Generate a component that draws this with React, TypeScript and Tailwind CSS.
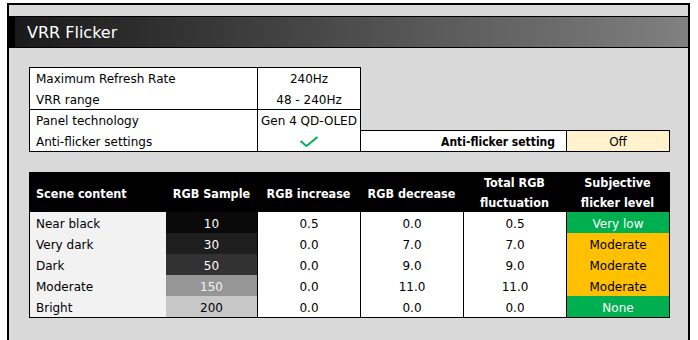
import React from "react";

const font = { fontFamily: '"DejaVu Sans", Verdana, sans-serif' };

type Row = {
  scene: string;
  sample: number;
  sampleBg: string;
  sampleText: string;
  inc: string;
  dec: string;
  total: string;
  level: string;
  levelBg: string;
  levelText: string;
};

const rows: Row[] = [
  { scene: "Near black", sample: 10, sampleBg: "bg-[#0a0a0a]", sampleText: "text-white", inc: "0.5", dec: "0.0", total: "0.5", level: "Very low", levelBg: "bg-[#00b050]", levelText: "text-white" },
  { scene: "Very dark", sample: 30, sampleBg: "bg-[#1e1e1e]", sampleText: "text-white", inc: "0.0", dec: "7.0", total: "7.0", level: "Moderate", levelBg: "bg-[#ffc000]", levelText: "text-black" },
  { scene: "Dark", sample: 50, sampleBg: "bg-[#323232]", sampleText: "text-white", inc: "0.0", dec: "9.0", total: "9.0", level: "Moderate", levelBg: "bg-[#ffc000]", levelText: "text-black" },
  { scene: "Moderate", sample: 150, sampleBg: "bg-[#969696]", sampleText: "text-[#f2f2f2]", inc: "0.0", dec: "11.0", total: "11.0", level: "Moderate", levelBg: "bg-[#ffc000]", levelText: "text-black" },
  { scene: "Bright", sample: 200, sampleBg: "bg-[#c8c8c8]", sampleText: "text-black", inc: "0.0", dec: "0.0", total: "0.0", level: "None", levelBg: "bg-[#00b050]", levelText: "text-white" },
];

function Check() {
  return (
    <svg width="20" height="12" viewBox="0 0 20 12" fill="none">
      <polyline points="1.5,5 7.5,10 18.5,1" stroke="#00b050" strokeWidth="2" strokeLinecap="butt" strokeLinejoin="miter" />
    </svg>
  );
}

function SpecRow({ label, value }: { label: string; value: React.ReactNode }) {
  return (
    <div className="flex flex-1 items-center">
      <div className="flex h-full w-[228px] items-center border-r border-black pl-[6px] pt-[2px]">{label}</div>
      <div className="flex h-full flex-1 items-center justify-center pt-[2px]">{value}</div>
    </div>
  );
}

const cell = "flex items-center justify-center pt-[2px]";
const cols = "grid-cols-[136px_91px_103px_103px_103px_103px]";

export default function App() {
  return (
    <div className="h-[340px] w-[698px] overflow-hidden bg-white pl-[7px] pt-[3px] text-black" style={font}>
      <div className="flex h-[337px] w-[683px] flex-col border-2 border-b-0 border-black bg-[#d9d9d9]">
        <div className="mt-[11px] flex h-[32px] items-center border-y border-black bg-[linear-gradient(to_right,#000_0px,#000_6px,#1a1a1a_6px,#808080_100%)] pl-[18px] pt-[1px]">
          <span className="text-[16px] leading-none text-white">VRR Flicker</span>
        </div>

        <div className="pl-[20px] pt-[19px] text-[12px] leading-none">
          <div className="flex items-end">
            <div className="flex w-[332px] flex-col border border-black bg-white">
              <div className="flex h-[42px] flex-col border-b border-black">
                <SpecRow label="Maximum Refresh Rate" value="240Hz" />
                <SpecRow label="VRR range" value="48 - 240Hz" />
              </div>
              <div className="flex h-[41px] flex-col">
                <SpecRow label="Panel technology" value="Gen 4 QD-OLED" />
                <SpecRow label="Anti-flicker settings" value={<Check />} />
              </div>
            </div>
            <div className="flex h-[22px] w-[309px] border-y border-r border-black bg-white">
              <div className="flex w-[206px] items-center justify-end border-r border-black pr-[11px] pt-[2px] font-bold [font-stretch:condensed]">
                Anti-flicker setting
              </div>
              <div className="flex flex-1 items-center justify-center bg-[#fff2cc] pt-[2px]">Off</div>
            </div>
          </div>

          <div className="mt-[20px] w-[641px] border border-black bg-white">
            <div className={`grid h-[39px] ${cols} bg-black text-[12.5px] font-bold text-white [font-stretch:condensed]`}>
              <div className="flex items-center pl-[6px] pt-[2px]">Scene content</div>
              <div className={cell}>RGB Sample</div>
              <div className={cell}>RGB increase</div>
              <div className={cell}>RGB decrease</div>
              <div className="flex items-center justify-center text-center leading-[20px]">
                Total RGB
                <br />
                fluctuation
              </div>
              <div className="flex items-center justify-center text-center leading-[20px]">
                Subjective
                <br />
                flicker level
              </div>
            </div>
            {rows.map((r) => (
              <div key={r.scene} className={`grid h-[21px] ${cols}`}>
                <div className="flex items-center bg-[#f2f2f2] pl-[6px] pt-[2px]">{r.scene}</div>
                <div className={`${cell} ${r.sampleBg} ${r.sampleText}`}>{r.sample}</div>
                <div className={`${cell} border-l border-black`}>{r.inc}</div>
                <div className={`${cell} border-l border-black`}>{r.dec}</div>
                <div className={`${cell} border-l border-black`}>{r.total}</div>
                <div className={`${cell} border-l border-black ${r.levelBg} ${r.levelText}`}>{r.level}</div>
              </div>
            ))}
          </div>
        </div>
      </div>
    </div>
  );
}
